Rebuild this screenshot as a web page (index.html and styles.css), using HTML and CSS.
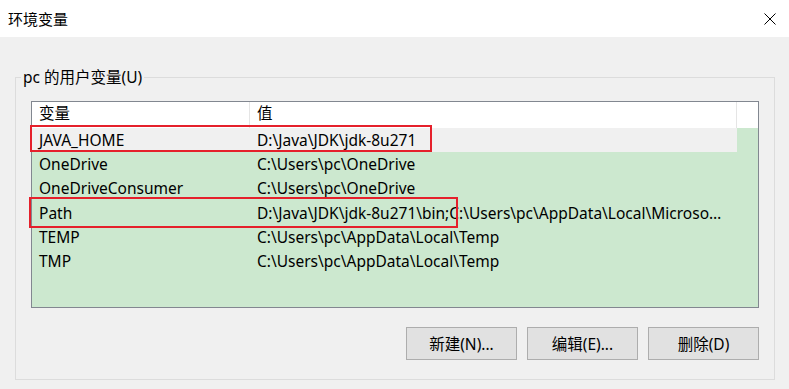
FILE: index.html
```html
<!DOCTYPE html>
<html lang="zh-CN">
<head>
  <meta charset="UTF-8" />
  <title>环境变量</title>
  <link rel="stylesheet" href="styles.css">
</head>
<body>
  <div class="titlebar">
    <span class="title">环境变量</span>
    <svg class="close" width="12" height="12" viewBox="0 0 12 12">
      <path d="M0.5 0.5 L11.5 11.5 M11.5 0.5 L0.5 11.5" stroke="#000" stroke-width="1" fill="none" />
    </svg>
  </div>

  <div class="content">
    <fieldset class="group">
      <legend>pc 的用户变量(U)</legend>

      <div class="list">
        <div class="list-head">
          <div class="col name">变量</div>
          <div class="col value">值</div>
          <div class="col filler"></div>
        </div>
        <div class="rows" id="rows">
          <!-- rows are filled in below -->
        </div>
        <div class="mark mark-java"></div>
        <div class="mark mark-path"></div>
      </div>

      <div class="buttons">
        <button>新建(N)...</button>
        <button>编辑(E)...</button>
        <button>删除(D)</button>
      </div>
    </fieldset>
  </div>

  <script>
    const vars = [
      { name: "JAVA_HOME", value: "D:\\Java\\JDK\\jdk-8u271", current: true },
      { name: "OneDrive", value: "C:\\Users\\pc\\OneDrive" },
      { name: "OneDriveConsumer", value: "C:\\Users\\pc\\OneDrive" },
      { name: "Path", value: "D:\\Java\\JDK\\jdk-8u271\\bin;C:\\Users\\pc\\AppData\\Local\\Microsoft\\WindowsApps;" },
      { name: "TEMP", value: "C:\\Users\\pc\\AppData\\Local\\Temp" },
      { name: "TMP", value: "C:\\Users\\pc\\AppData\\Local\\Temp" },
    ];

    const rows = document.getElementById('rows');
    vars.forEach(v => {
      const row = document.createElement('div');
      row.className = v.current ? 'row current' : 'row';
      row.innerHTML = `<div class="col name">${v.name}</div><div class="col value">${v.value}</div>`;
      rows.appendChild(row);
    });
  </script>
</body>
</html>
```

FILE: styles.css
```css
* {
  box-sizing: border-box;
  margin: 0;
  padding: 0;
}
body {
  width: 789px;
  height: 389px;
  background: #f0f0f0;
  font-family: 'Noto Sans', 'Noto Sans CJK SC', sans-serif;
  font-size: 15.5px;
  color: #000;
  overflow: hidden;
}
.titlebar {
  height: 37px;
  background: #fff;
  display: flex;
  align-items: center;
  justify-content: space-between;
  padding: 0 13px 0 8px;
}
.title {
  font-size: 15px;
}
.close {
  display: block;
}
.content {
  padding: 30px 14px 0 15px;
}
.group {
  border: 1px solid #dcdcdc;
  padding: 14px 15px 19px 15px;
}
.group legend {
  margin-left: -10px;
  padding: 0 2px;
  line-height: 20px;
}
.list {
  position: relative;
  height: 207px;
  border: 1px solid #828790;
  background: #cce8cf;
}
.list-head {
  display: flex;
  height: 26px;
  background: #fff;
}
.list-head .col {
  line-height: 23px;
  border-right: 1px solid #e5e5e5;
}
.list-head .filler {
  flex: 1;
  border-right: none;
}
.col {
  padding: 0 7px;
  white-space: nowrap;
  overflow: hidden;
  text-overflow: ellipsis;
}
.col.name {
  width: 218px;
}
.col.value {
  width: 487px;
  padding-right: 14px;
}
.row {
  display: flex;
  height: 24.2px;
  line-height: 24px;
}
.row.current .col {
  background: #f0f0f0;
}
.mark {
  position: absolute;
  border: 2px solid #e5202b;
}
.mark-java {
  left: -2px;
  top: 23px;
  width: 402px;
  height: 27px;
}
.mark-path {
  left: -3px;
  top: 95px;
  width: 429px;
  height: 31px;
}
.buttons {
  display: flex;
  justify-content: flex-end;
  gap: 10px;
  margin-top: 19px;
}
.buttons button {
  width: 111px;
  height: 33px;
  background: #e1e1e1;
  border: 1px solid #adadad;
  font-family: inherit;
  font-size: 15.5px;
  color: #000;
}
```
